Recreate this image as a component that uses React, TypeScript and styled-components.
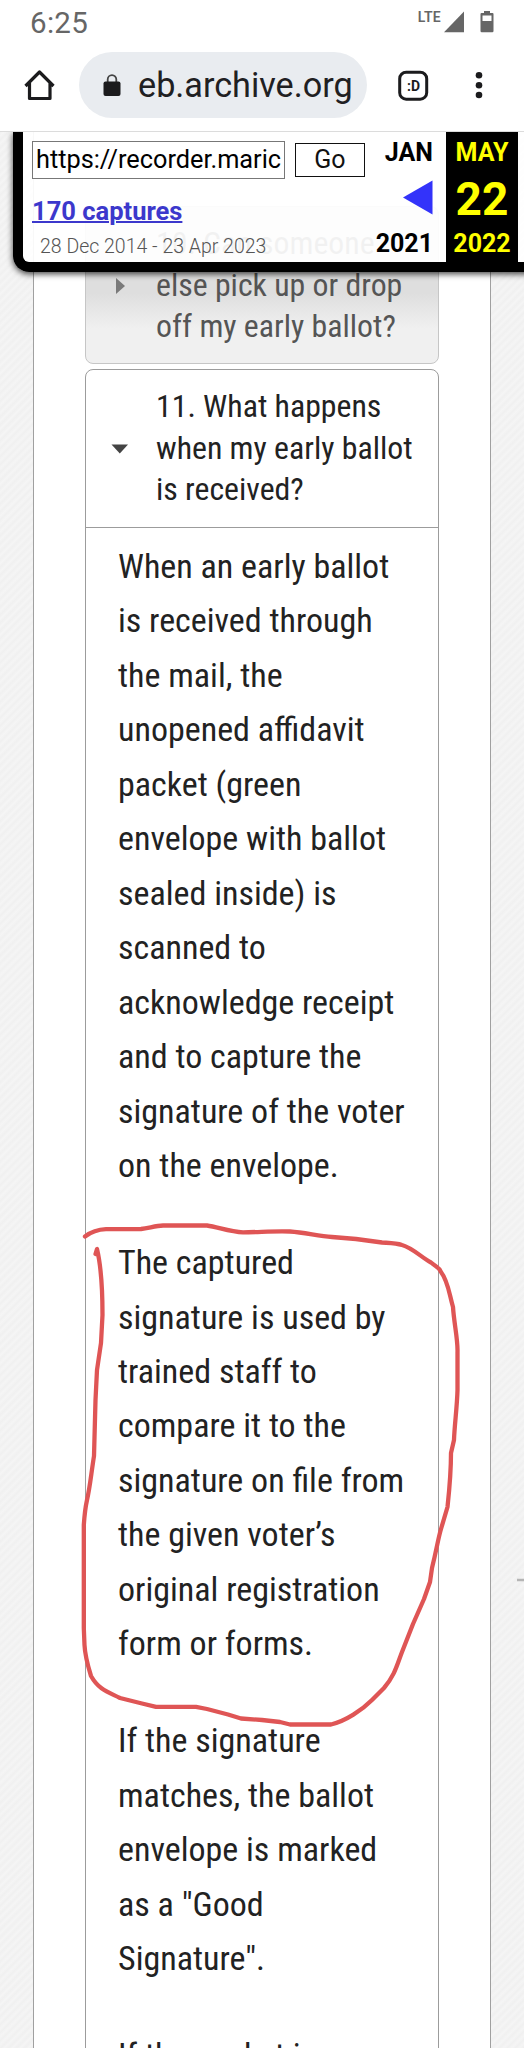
import React from "react";
import styled, { createGlobalStyle } from "styled-components";

const GlobalStyle = createGlobalStyle`
  * { box-sizing: border-box; }
  body { margin: 0; background: #fff; font-family: Roboto, "Liberation Sans", sans-serif; }
`;

const Screen = styled.div`
  position: relative;
  width: 524px;
  height: 2048px;
  overflow: hidden;
  display: flex;
  flex-direction: column;
  background: #fff;
`;

const StatusBar = styled.header`
  height: 46px;
  flex: none;
  display: flex;
  align-items: flex-start;
  justify-content: space-between;
  padding: 0 30px 0 30px;
  color: #666;
`;

const Clock = styled.span`
  font-size: 29.5px;
  line-height: 46px;
  letter-spacing: 0.3px;
`;

const StatusIcons = styled.div`
  display: flex;
  align-items: flex-start;
  padding-top: 11px;
`;

const Lte = styled.span`
  font-size: 14px;
  line-height: 13px;
  font-weight: 600;
  letter-spacing: 0.3px;
  margin-right: 3px;
`;

const BatteryIcon = styled.svg`
  margin-left: 16px;
`;

const BrowserBar = styled.nav`
  height: 86px;
  flex: none;
  display: flex;
  align-items: flex-start;
  padding: 6px 0 0 24px;
  border-bottom: 1px solid #dcdcdc;
`;

const NavIcon = styled.svg<{ $left?: number }>`
  flex: none;
  display: block;
  margin: 18px 0 0 ${(p) => p.$left ?? 0}px;
`;

const AddressPill = styled.div`
  width: 288px;
  height: 66px;
  margin-left: 24px;
  border-radius: 33px;
  background: #e9ecf0;
  display: flex;
  align-items: center;
  padding-left: 24px;
  color: #1f2022;
`;

const Host = styled.span`
  margin-left: 17px;
  font-size: 34.2px;
  line-height: 68px;
  white-space: nowrap;
`;

const Viewport = styled.main`
  position: relative;
  flex: 1;
  overflow: hidden;
  padding: 0 33px;
  background: repeating-linear-gradient(135deg, #f0f0f0 0, #f5f5f5 2.8px, #f0f0f0 5.6px);
`;

const Column = styled.div`
  width: 458px;
  height: 1916px;
  border: solid #a0a0a0;
  border-width: 0 1px;
  background: #fff;
  padding: 74px 51px 0 51px;
`;

const Item = styled.section<{ $open?: boolean }>`
  width: 354px;
  border: 1px solid ${(p) => (p.$open ? "#9c9c9c" : "#c6c6c6")};
  border-radius: ${(p) => (p.$open ? "8px 8px 0 0" : "8px")};
  background: ${(p) => (p.$open ? "#fff" : "linear-gradient(#dedede 0, #dedede 55%, #f0f0f0 78%)")};
  color: ${(p) => (p.$open ? "#222" : "#555")};
  margin-bottom: 5px;
`;

const Heading = styled.h3<{ $open?: boolean }>`
  margin: 0;
  height: ${(p) => (p.$open ? 158 : 156)}px;
  padding: 16px 0 0 25px;
  border-bottom: ${(p) => (p.$open ? "1px solid #9c9c9c" : "0")};
  display: flex;
  font: 400 31.8px/41.6px "Roboto Condensed", Roboto, sans-serif;
  font-stretch: 75%;
`;

const Caret = styled.svg`
  flex: none;
  width: 18px;
  height: 18px;
  margin: 54px 27px 0 0;
`;

const Line = styled.span`
  display: block;
  white-space: nowrap;
`;

const Body = styled.div`
  padding: 11px 0 0 32px;
  height: 1600px;
  font: 400 34px/54.45px "Roboto Condensed", Roboto, sans-serif;
  font-stretch: 75%;
`;

const Paragraph = styled.p`
  margin: 0 0 42.7px;
`;

const Toolbar = styled.aside`
  position: absolute;
  left: 13px;
  top: 0;
  width: 530px;
  height: 140px;
  display: flex;
  border: solid #000;
  border-width: 0 0 10px 10px;
  border-radius: 0 0 0 16px;
  background: rgba(255, 255, 255, 0.92);
  box-shadow: 0 2px 6px rgba(0, 0, 0, 0.75);
`;

const Capture = styled.div`
  width: 343px;
  padding: 9px 0 0 9px;
`;

const SearchRow = styled.div`
  display: flex;
  align-items: center;
  gap: 10px;
`;

const UrlField = styled.div`
  width: 253px;
  height: 38px;
  border: 1px solid #777;
  background: #fff;
  padding-left: 3px;
  font-size: 25.3px;
  line-height: 36px;
  overflow: hidden;
  white-space: nowrap;
`;

const GoButton = styled.button`
  width: 70px;
  height: 34px;
  padding: 0;
  border: 1.5px solid #111;
  background: #fff;
  color: #111;
  font: 400 25px/30px Roboto, sans-serif;
`;

const CapturesLink = styled.a`
  display: block;
  margin-top: 18px;
  font-size: 25.5px;
  line-height: 28px;
  font-weight: 700;
  color: #3c38cc;
  text-decoration: underline;
  text-decoration-thickness: 2px;
`;

const Range = styled.div`
  margin: 10px 0 0 8px;
  font-size: 19.5px;
  line-height: 24px;
  font-weight: 300;
  color: #555;
  white-space: nowrap;
`;

const DateColumn = styled.div<{ $current?: boolean }>`
  width: ${(p) => (p.$current ? 72 : 80)}px;
  height: 140px;
  padding: 7px ${(p) => (p.$current ? 0 : 13)}px 0 0;
  display: flex;
  flex-direction: column;
  align-items: ${(p) => (p.$current ? "center" : "flex-end")};
  background: ${(p) => (p.$current ? "#000" : "transparent")};
  color: ${(p) => (p.$current ? "#ff0" : "#000")};
  font-size: 25px;
  line-height: 28px;
  font-weight: 700;
`;

const Middle = styled.div`
  height: 63px;
  display: flex;
  align-items: center;
  font-size: 46px;
`;

const Ink = styled.svg`
  position: absolute;
  left: 0;
  top: 0;
  pointer-events: none;
`;

const q10 = ["10. Can someone", "else pick up or drop", "off my early ballot?"];
const q11 = ["11. What happens", "when my early ballot", "is received?"];
const answer = [
  [
    "When an early ballot", "is received through", "the mail, the", "unopened affidavit",
    "packet (green", "envelope with ballot", "sealed inside) is", "scanned to",
    "acknowledge receipt", "and to capture the", "signature of the voter", "on the envelope.",
  ],
  [
    "The captured", "signature is used by", "trained staff to", "compare it to the",
    "signature on file from", "the given voter’s", "original registration", "form or forms.",
  ],
  ["If the signature", "matches, the ballot", "envelope is marked", "as a \"Good", "Signature\"."],
  ["If the packet is"],
];

const Lines = ({ text }: { text: string[] }) => (
  <>
    {text.map((t) => (
      <Line key={t}>{t}</Line>
    ))}
  </>
);

export default function App() {
  return (
    <Screen>
      <GlobalStyle />
      <StatusBar>
        <Clock>6:25</Clock>
        <StatusIcons>
          <Lte>LTE</Lte>
          <svg width="20" height="22" viewBox="0 0 20 22">
            <path d="M20 0.5V21.2H0Z" fill="#666" />
          </svg>
          <BatteryIcon width="14" height="22" viewBox="0 0 14 22">
            <path d="M4 0h6v2h2.5q1 0 1 1v17q0 1.200-1.200 1.200H1.700Q.5 21.200.5 20V3q0-1 1-1H4Z" fill="#666" />
            <path d="M2.500 4.500h9v5.500h-9Z" fill="#fff" />
          </BatteryIcon>
        </StatusIcons>
      </StatusBar>
      <BrowserBar>
        <NavIcon width="31" height="31" viewBox="0 0 31 31" fill="none" stroke="#1b1b1d" strokeWidth="3.200" strokeLinejoin="round">
          <path d="M1.500 16 15.500 2 29.500 16M5.500 13V28.500H26V13" />
        </NavIcon>
        <AddressPill>
          <svg width="18" height="23" viewBox="0 0 18 23">
            <path d="M4.700 9V5.500a4.300 4.300 0 0 1 8.600 0V9" fill="none" stroke="#444" strokeWidth="1.800" />
            <rect x="0.500" y="7.500" width="17" height="14.500" rx="2" fill="#1b1b1d" />
          </svg>
          <Host>eb.archive.org</Host>
        </AddressPill>
        <NavIcon $left={31} width="31" height="31" viewBox="0 0 31 31">
          <rect x="1.700" y="2.200" width="27" height="27" rx="6.500" fill="none" stroke="#1b1b1d" strokeWidth="3" />
          <text x="15.500" y="20.500" textAnchor="middle" fontFamily="Roboto, sans-serif" fontWeight="700" fontSize="15.500" textLength="13" lengthAdjust="spacingAndGlyphs" fill="#1b1b1d">:D</text>
        </NavIcon>
        <NavIcon $left={46} width="8" height="31" viewBox="0 0 8 31" fill="#1b1b1d">
          <circle cx="4" cy="5.300" r="3.300" />
          <circle cx="4" cy="15.300" r="3.300" />
          <circle cx="4" cy="25" r="3.300" />
        </NavIcon>
      </BrowserBar>
      <Viewport>
        <Column>
          <Item>
            <Heading>
              <Caret viewBox="0 0 18 18">
                <path d="M5 1 14 9 5 17Z" fill="#7a7a7a" />
              </Caret>
              <div><Lines text={q10} /></div>
            </Heading>
          </Item>
          <Item $open>
            <Heading $open>
              <Caret viewBox="0 0 18 18">
                <path d="M0.500 4.500H17L8.800 13.500Z" fill="#444" />
              </Caret>
              <div><Lines text={q11} /></div>
            </Heading>
            <Body>
              {answer.map((p) => (
                <Paragraph key={p[0]}><Lines text={p} /></Paragraph>
              ))}
            </Body>
          </Item>
        </Column>
        <Toolbar>
          <Capture>
            <SearchRow>
              <UrlField>https://recorder.maric</UrlField>
              <GoButton>Go</GoButton>
            </SearchRow>
            <CapturesLink>170 captures</CapturesLink>
            <Range>28 Dec 2014 - 23 Apr 2023</Range>
          </Capture>
          <DateColumn>
            <span>JAN</span>
            <Middle>
              <svg width="30" height="38" viewBox="0 0 30 38">
                <path d="M29.500 0.500V34.500L0 17.500Z" fill="#3333fa" />
              </svg>
            </Middle>
            <span>2021</span>
          </DateColumn>
          <DateColumn $current>
            <span>MAY</span>
            <Middle>22</Middle>
            <span>2022</span>
          </DateColumn>
        </Toolbar>
      </Viewport>
      <Ink width="524" height="2048" viewBox="0 0 524 2048" fill="none">
        <path
          d="M85 1236.500C91 1232 98 1229.500 106 1229.200L141 1229C149 1228 156 1225.800 163 1225.500H207C218 1227 230 1232 243 1232.300C258 1232.300 275 1230.800 290 1231.500C305 1232.500 318 1236 332 1237L356 1239L382 1242.500C389 1243 396 1243 402 1245C413 1248 422 1258 431 1262.500C436 1267 439 1267 441 1272C448 1281 449 1293 453 1307C454 1323 458 1340 457.500 1352V1390C457 1408 454.500 1425 454 1440L451 1453C451 1475 449 1493 447.500 1507L441 1529C438 1539 437 1548 432 1568L430 1582L424 1599L413 1624L402 1652C397 1665 395 1675 384 1688L372 1700C362 1710 346 1721 331 1724.500H290L280 1722L262 1720L241 1718.500L228 1714.500L207 1709L196 1706.800H156L142 1703.500L120 1698C108 1692 99 1690 91 1676C87 1663 85 1656 84.500 1645L83.800 1628V1525C84.500 1515 85 1509 87 1500C90 1487 91 1475 94 1456L95.500 1400L97 1370L101 1343L102.500 1315C102.500 1295 102 1270 97 1249L95.500 1254"
          stroke="#df5555" strokeWidth="4.300" strokeLinecap="round" strokeLinejoin="round"
        />
        <path d="M517 1580H524" stroke="#b5b5b5" strokeWidth="2.500" />
      </Ink>
    </Screen>
  );
}
